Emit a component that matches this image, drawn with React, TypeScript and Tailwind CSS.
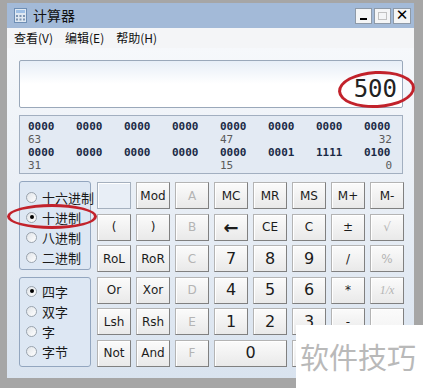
import React from 'react';

type Key = { label: string; off?: boolean; wide?: boolean; tall?: boolean; blank?: boolean; cls?: string };

const keys: Key[] = [
  { label: '', blank: true }, { label: 'Mod' }, { label: 'A', off: true }, { label: 'MC' }, { label: 'MR' }, { label: 'MS' }, { label: 'M+' }, { label: 'M-' },
  { label: '(' }, { label: ')' }, { label: 'B', off: true }, { label: '←', cls: 'text-[18px] font-bold' }, { label: 'CE' }, { label: 'C' }, { label: '±' }, { label: '√', off: true },
  { label: 'RoL' }, { label: 'RoR' }, { label: 'C', off: true }, { label: '7' }, { label: '8' }, { label: '9' }, { label: '/' }, { label: '%', off: true },
  { label: 'Or' }, { label: 'Xor' }, { label: 'D', off: true }, { label: '4' }, { label: '5' }, { label: '6' }, { label: '*' }, { label: '1/x', off: true, cls: 'italic text-[10px] [font-family:"Liberation_Serif",serif]' },
  { label: 'Lsh' }, { label: 'Rsh' }, { label: 'E', off: true }, { label: '1' }, { label: '2' }, { label: '3' }, { label: '-' }, { label: '=', tall: true },
  { label: 'Not' }, { label: 'And' }, { label: 'F', off: true }, { label: '0', wide: true }, { label: '.' }, { label: '+' },
];

const radix = ['十六进制', '十进制', '八进制', '二进制'];
const words = ['四字', '双字', '字', '字节'];

const bits1 = ['0000', '0000', '0000', '0000', '0000', '0000', '0000', '0000'];
const bits2 = ['0000', '0000', '0000', '0000', '0000', '0001', '1111', '0100'];

function Radio({ label, on }: { label: string; on?: boolean }) {
  return (
    <div className="flex items-center h-[20px] gap-[5px] whitespace-nowrap">
      <span className="shrink-0 w-[11px] h-[11px] rounded-full border border-[#9aa3ad] bg-gradient-to-br from-[#e0e4e8] to-white flex items-center justify-center">
        {on && <span className="w-[4px] h-[4px] rounded-full bg-black" />}
      </span>
      <span className="text-[13px] text-[#1a1a1a] leading-none">{label}</span>
    </div>
  );
}

function Button({ k }: { k: Key }) {
  if (k.blank) {
    return <div className="border border-[#a5b0be] bg-[#e8eef6] shadow-[inset_1px_1px_0_#fff]" />;
  }
  const span = k.wide ? 'col-span-2' : k.tall ? 'row-span-2' : '';
  return (
    <div
      className={`${span} flex items-center justify-center border border-[#b4b4b4] border-r-[#808080] border-b-[#808080] bg-gradient-to-b from-[#fbfbfb] to-[#e9e9e9] shadow-[inset_1px_1px_0_#fff] ${
        /^[0-9]$/.test(k.label) ? 'text-[16px]' : 'text-[12px]'
      } ${k.off ? 'text-[#b4b4b4]' : 'text-[#1c1c1c]'} ${k.cls ?? ''}`}
    >
      {k.label}
    </div>
  );
}

export default function App() {
  return (
    <div className="w-[423px] h-[388px] bg-[#a6a6a6] relative overflow-hidden [font-family:'DejaVu_Sans','Noto_Sans_CJK_SC',sans-serif]">
      <div className="ml-[7px] mt-[3px] w-[407px] h-[375px] flex flex-col">
        {/* 标题栏 */}
        <div className="h-[25px] bg-[#a3bad8] flex items-center pl-[7px] pr-[3px]">
          <svg width="13" height="15" viewBox="0 0 13 15">
            <rect x="0.5" y="0.5" width="12" height="14" fill="#dfe8f2" stroke="#6f8fb5" />
            <rect x="2" y="2" width="9" height="3" fill="#9fc0e6" />
            <rect x="2" y="7" width="2" height="2" fill="#7f96b3" />
            <rect x="5.5" y="7" width="2" height="2" fill="#7f96b3" />
            <rect x="9" y="7" width="2" height="2" fill="#7f96b3" />
            <rect x="2" y="10.5" width="2" height="2" fill="#7f96b3" />
            <rect x="5.5" y="10.5" width="2" height="2" fill="#7f96b3" />
            <rect x="9" y="10.5" width="2" height="2" fill="#7f96b3" />
          </svg>
          <span className="ml-[6px] text-[14px] text-[#111] [font-family:'Noto_Sans_CJK_SC',sans-serif]">计算器</span>
          <div className="ml-auto flex gap-[2px]">
            <div className="w-[17px] h-[16px] bg-[#f4f5f6] border border-[#8e9aa8] flex items-end justify-center pb-[3px]">
              <span className="w-[7px] h-[2px] bg-black" />
            </div>
            <div className="w-[17px] h-[16px] bg-[#f4f5f6] border border-[#8e9aa8] flex items-center justify-center">
              <span className="w-[9px] h-[8px] border border-[#c2c2c2]" />
            </div>
            <div className="w-[18px] h-[16px] bg-[#f4f5f6] border border-[#8e9aa8] flex items-center justify-center text-[15px] font-bold leading-none text-black">
              ✕
            </div>
          </div>
        </div>

        {/* 菜单栏 */}
        <div className="h-[20px] bg-[#f4f5f7] flex items-center pl-[7px] gap-[12px] text-[12px] text-[#111] [font-family:'Noto_Sans_CJK_SC',sans-serif]">
          <span>查看(V)</span>
          <span>编辑(E)</span>
          <span>帮助(H)</span>
        </div>

        {/* 主体 */}
        <div className="flex-1 bg-gradient-to-b from-[#f6f8fb] to-[#d9e3ef] pl-[12px] pr-[11px] pt-[12px] flex flex-col">
          <div className="h-[48px] border border-[#9aa8ba] rounded-[2px] bg-gradient-to-b from-[#e7eef7] via-white to-white flex items-end justify-end pr-[5px] pb-[6px]">
            <span className="text-[24px] leading-none text-[#222] [font-family:'DejaVu_Sans_Mono',monospace]">500</span>
          </div>

          <div className="mt-[7px] h-[59px] border border-[#a2afc0] bg-[#e3eaf3] pl-[8px] pt-[4px] [font-family:'DejaVu_Sans_Mono',monospace] text-[11px] leading-[13px]">
            <div className="grid grid-cols-[repeat(8,48px)] font-bold text-[#1b2a46]">
              {bits1.map((b, i) => <span key={i}>{b}</span>)}
            </div>
            <div className="grid grid-cols-[repeat(8,48px)] text-[#5a5a5a]">
              <span>63</span><span /><span /><span /><span>47</span><span /><span /><span className="text-right w-[28px]">32</span>
            </div>
            <div className="grid grid-cols-[repeat(8,48px)] font-bold text-[#1b2a46]">
              {bits2.map((b, i) => <span key={i}>{b}</span>)}
            </div>
            <div className="grid grid-cols-[repeat(8,48px)] text-[#5a5a5a]">
              <span>31</span><span /><span /><span /><span>15</span><span /><span /><span className="text-right w-[28px]">0</span>
            </div>
          </div>

          <div className="mt-[7px] flex gap-[6px]">
            <div className="w-[72px] min-w-0 shrink-0 flex flex-col gap-[7px] [font-family:'Noto_Sans_CJK_SC',sans-serif]">
              <div className="h-[89px] border border-[#93a6bf] rounded-[3px] bg-[#dde7f3] pl-[6px] pt-[5px]">
                {radix.map((r, i) => <Radio key={r} label={r} on={i === 1} />)}
              </div>
              <div className="h-[90px] border border-[#93a6bf] rounded-[3px] bg-[#dde7f3] pl-[6px] pt-[3px]">
                {words.map((w, i) => <Radio key={w} label={w} on={i === 0} />)}
              </div>
            </div>
            <div className="shrink-0 grid grid-cols-[repeat(8,34px)] grid-rows-[repeat(6,27px)] gap-x-[5px] gap-y-[4.6px] mt-[1px]">
              {keys.map((k, i) => <Button key={i} k={k} />)}
            </div>
          </div>
        </div>
      </div>

      {/* 红色圈注 */}
      <div className="absolute left-[338px] top-[71px] w-[77px] h-[37px] rounded-[50%] border-[3px] border-[#c2222b] -rotate-3" />
      <div className="absolute left-[7px] top-[204px] w-[90px] h-[25px] rounded-[50%] border-[3px] border-[#c2222b]" />

      {/* 水印 */}
      <div className="absolute left-[296px] top-[325px] w-[127px] h-[63px] bg-white flex items-center pl-[4px] text-[29px] text-[#b9b9b9] [font-family:'Noto_Sans_CJK_SC',sans-serif] leading-none">
        软件技巧
      </div>
    </div>
  );
}
